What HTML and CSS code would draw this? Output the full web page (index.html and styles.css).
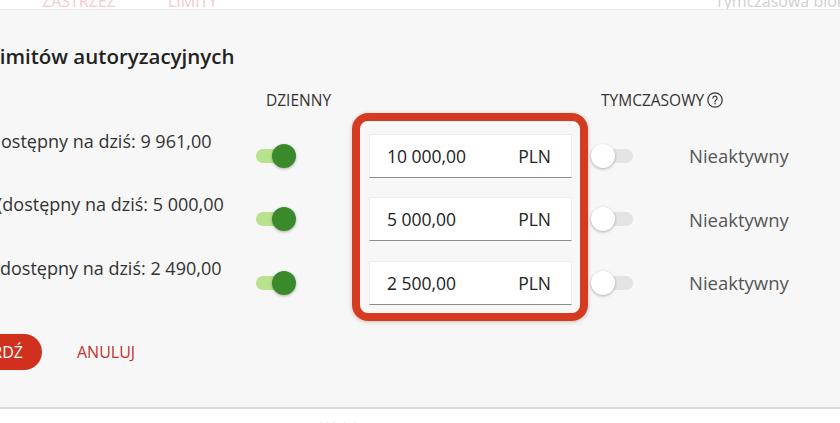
FILE: index.html
```html
<!DOCTYPE html>
<html lang="pl">
<head>
    <meta charset="UTF-8">
    <meta name="viewport" content="width=device-width, initial-scale=1.0">
    <title>Zmiana limitów autoryzacyjnych</title>
    <link rel="stylesheet" href="styles.css">
</head>
<body>
    <div class="tabs">
        <span class="tab">ZASTRZEŻ</span>
        <span class="tab">LIMITY</span>
        <span class="tab-note">Tymczasowa blokada karty</span>
    </div>

    <div class="modal">
        <h2 class="modal-title">limitów autoryzacyjnych</h2>

        <div class="limits">
            <div class="col-head col-daily">DZIENNY</div>
            <div class="col-head col-temp">
                TYMCZASOWY
                <svg class="help-icon" width="16" height="16" viewBox="0 0 16 16">
                    <circle cx="8" cy="8" r="7.2" fill="none" stroke="#333" stroke-width="1.2"/>
                    <path d="M5.9 6.2a2.1 2.1 0 1 1 3.1 1.8c-.7.4-1 .8-1 1.6v.4" fill="none" stroke="#333" stroke-width="1.2" stroke-linecap="round"/>
                    <circle cx="8" cy="11.7" r=".8" fill="#333"/>
                </svg>
            </div>

            <!-- wiersz 1 -->
            <div class="row-label shift-lg">dostępny na dziś: 9 961,00</div>
            <div class="cell"><span class="switch on"><span class="knob"></span></span></div>
            <div class="cell"><div class="amount"><span>10 000,00</span><span>PLN</span></div></div>
            <div class="cell"><span class="switch"><span class="knob"></span></span></div>
            <div class="cell status">Nieaktywny</div>

            <!-- wiersz 2 -->
            <div class="row-label shift-sm">(dostępny na dziś: 5 000,00</div>
            <div class="cell"><span class="switch on"><span class="knob"></span></span></div>
            <div class="cell"><div class="amount"><span>5 000,00</span><span>PLN</span></div></div>
            <div class="cell"><span class="switch"><span class="knob"></span></span></div>
            <div class="cell status">Nieaktywny</div>

            <!-- wiersz 3 -->
            <div class="row-label">dostępny na dziś: 2 490,00</div>
            <div class="cell"><span class="switch on"><span class="knob"></span></span></div>
            <div class="cell"><div class="amount"><span>2 500,00</span><span>PLN</span></div></div>
            <div class="cell"><span class="switch"><span class="knob"></span></span></div>
            <div class="cell status">Nieaktywny</div>

            <div class="highlight"></div>
        </div>

        <div class="actions">
            <div class="confirm-wrap"><button class="btn-confirm">ZATWIERDŹ</button></div>
            <button class="btn-cancel">ANULUJ</button>
        </div>
    </div>

    <div class="below">Wybierz</div>
</body>
</html>
```

FILE: styles.css
```css
body {
    margin: 0;
    font-family: "Open Sans", "Liberation Sans", sans-serif;
    background-color: #fff;
    color: #333;
    overflow: hidden;
}
.tabs {
    display: flex;
    align-items: flex-end;
    height: 9px;
    padding-left: 42px;
    border-bottom: 1px solid #e8e8e8;
    overflow: hidden;
    white-space: nowrap;
}
.tab {
    flex-shrink: 0;
    width: 126px;
    font-size: 16px;
    line-height: 16px;
    color: #f2cccc;
}
.tab-note {
    flex-shrink: 0;
    margin-left: 421px;
    font-size: 16px;
    line-height: 16px;
    color: #cfcfcf;
}
.modal {
    height: 364px;
    padding-top: 33px;
    background-color: #f7f7f7;
    border-bottom: 2px solid #dadada;
}
.modal-title {
    margin: 0 0 21px -6px;
    font-size: 20.5px;
    font-weight: 600;
    line-height: 26px;
    color: #222;
}
.limits {
    position: relative;
    display: grid;
    grid-template-columns: 256px 113px 222px 98px 1fr;
    grid-template-rows: 24px repeat(3, 44px);
    row-gap: 19.5px;
}
.col-head {
    display: flex;
    align-items: center;
    gap: 3px;
    padding-left: 10px;
    font-size: 15.5px;
    line-height: 20px;
    color: #333;
    align-self: start;
}
.col-daily {
    grid-column: 2 / 4;
}
.col-temp {
    grid-column: 4 / 6;
}
.row-label {
    align-self: start;
    margin-top: -2px;
    font-size: 18px;
    line-height: 18px;
    white-space: nowrap;
    color: #333;
}
.row-label.shift-lg {
    margin-left: -10px;
}
.row-label.shift-sm {
    margin-left: -3px;
}
.cell {
    display: flex;
    align-items: center;
}
.switch {
    position: relative;
    display: inline-block;
    width: 42px;
    height: 24px;
}
.switch::before {
    content: "";
    position: absolute;
    left: 7px;
    right: 0;
    top: 5px;
    height: 14px;
    border-radius: 7px;
    background-color: #e4e4e4;
}
.switch .knob {
    position: absolute;
    left: 0;
    top: 0;
    width: 24px;
    height: 24px;
    border-radius: 50%;
    background-color: #fff;
    box-shadow: 0 1px 3px rgba(0, 0, 0, 0.3);
}
.switch.on {
    width: 40px;
}
.switch.on::before {
    left: 0;
    right: 6px;
    background-color: #b9e28e;
}
.switch.on .knob {
    left: auto;
    right: 0;
    background-color: #3a8a2c;
}
.amount {
    display: flex;
    justify-content: space-between;
    align-items: center;
    box-sizing: border-box;
    width: 203px;
    height: 44px;
    padding: 0 20px 0 17px;
    background-color: #fff;
    border: 1px solid #ececec;
    border-bottom-color: #8e8e8e;
    font-size: 17.5px;
    color: #222;
}
.status {
    font-size: 18.5px;
    color: #555;
}
.highlight {
    position: absolute;
    left: 352px;
    top: 23px;
    width: 236px;
    height: 208px;
    box-sizing: border-box;
    border: 8px solid #d53b21;
    border-radius: 16px;
    box-shadow: 0 1px 4px rgba(120, 30, 10, 0.25);
    pointer-events: none;
}
.actions {
    display: flex;
    align-items: center;
    margin-top: 29.5px;
}
.confirm-wrap {
    display: flex;
    justify-content: flex-end;
    width: 42px;
    flex-shrink: 0;
}
.btn-confirm {
    flex-shrink: 0;
    height: 36px;
    padding: 0 19px;
    border: none;
    border-radius: 18px;
    background-color: #d2301f;
    color: #fff;
    font-family: inherit;
    font-size: 16px;
}
.btn-cancel {
    margin-left: 35px;
    padding: 0;
    border: none;
    background: none;
    color: #c4302b;
    font-family: inherit;
    font-size: 16px;
}
.below {
    padding: 8px 0 0 320px;
    font-size: 16px;
    color: #e6e6e6;
}
```
